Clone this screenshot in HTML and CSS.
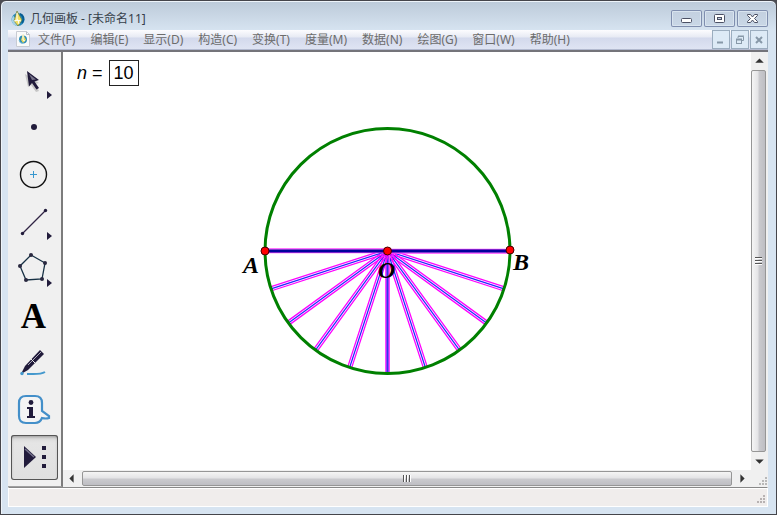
FILE: index.html
```html
<!DOCTYPE html>
<html lang="zh-CN">
<head>
<meta charset="utf-8">
<title>几何画板 - [未命名11]</title>
<link rel="stylesheet" href="styles.css">
</head>
<body>
<div class="window">
  <header class="titlebar">
    <svg class="logo" viewBox="0 0 16 16" aria-hidden="true">
      <circle cx="8" cy="8.500" r="6.500" fill="#2387b8"/>
      <path d="M1.500 8.500a6.500 6.500 0 0 0 6 6.500L5 7 3 4.500z" fill="#a5d3e6"/>
      <path d="M7 0l5 9-4 6-4-5z" fill="#f2df62" stroke="#637c45" stroke-width=".7"/>
      <path d="M7 2v7l4 1M4 10l4-1 1 4" fill="none" stroke="#fff" stroke-width="1"/>
      <path d="M10 3c3 1 5 5 2 9" fill="none" stroke="#075d91" stroke-width="2"/>
    </svg>
    <h1 class="title">几何画板 - [未命名11]</h1>
    <div class="window-buttons">
      <button class="win-btn" aria-label="最小化"><svg viewBox="0 0 31 17"><rect x="10.500" y="8.500" width="10" height="4" rx="1" fill="#fff" stroke="#4b5064"/></svg></button>
      <button class="win-btn" aria-label="最大化"><svg viewBox="0 0 31 17"><rect x="10.500" y="4.500" width="10" height="8" rx="1" fill="#fff" stroke="#4b5064"/><rect x="13.500" y="7.500" width="4" height="2" fill="#c5d3e4" stroke="#4b5064"/></svg></button>
      <button class="win-btn" aria-label="关闭"><svg viewBox="0 0 31 17"><path d="M10.500 4.500h3l2 2.500 2-2.500h3v1l-3 3 3 3v1h-3l-2-2.500-2 2.500h-3v-1l3-3-3-3z" fill="#fff" stroke="#4b5064"/></svg></button>
    </div>
  </header>

  <nav class="menubar" aria-label="菜单">
    <svg class="doc-icon" viewBox="0 0 14 16" aria-hidden="true">
      <path d="M.5.5h10l3 3v12H.5z" fill="#fafafa" stroke="#c8cbd3"/><path d="M10.500.5v3h3" fill="none" stroke="#b9bdc7"/>
      <circle cx="7" cy="8.500" r="4" fill="#2b8bb9"/><path d="M7 3l3 6-3 3-2-3z" fill="#e6d85c"/><path d="M7 4v5l2 1" fill="none" stroke="#fff"/><path d="M3 9a4 4 0 0 0 4 3.500" fill="none" stroke="#82c4dd"/>
    </svg>
    <div class="menus">
      <button>文件(F)</button><button>编辑(E)</button><button>显示(D)</button><button>构造(C)</button><button>变换(T)</button><button>度量(M)</button><button>数据(N)</button><button>绘图(G)</button><button>窗口(W)</button><button>帮助(H)</button>
    </div>
    <div class="doc-buttons">
      <button aria-label="最小化文档"><svg viewBox="0 0 18 18"><path d="M5 11.500h6" stroke="#8798a8" stroke-width="2"/></svg></button>
      <button aria-label="还原文档"><svg viewBox="0 0 18 18"><path d="M7 7V5.500h5.500v4H11M7 5h6" fill="none" stroke="#8798a8"/><rect x="5.500" y="8.500" width="5" height="4" fill="none" stroke="#8798a8"/><path d="M5 8.500h6" stroke="#8798a8" stroke-width="2"/></svg></button>
      <button aria-label="关闭文档"><svg viewBox="0 0 18 18"><path d="M6 6l6 6M12 6l-6 6" stroke="#8798a8" stroke-width="2"/></svg></button>
    </div>
  </nav>

  <main class="workspace">
    <aside class="toolbox" aria-label="工具箱">
      <button class="tool" aria-label="移动箭头工具"><svg viewBox="0 0 47 45">
        <path d="M14 15l3 13 3-2 5 7 3-1-4-7 4-1z" fill="#aaa" opacity=".6"/>
        <path d="M16 12l12 9-4.500 1.500 4.500 6.500-2.500 1.500L21 24l-3 3.500z" fill="#211b3b"/><path d="M18 15l7 5.500-4 .5z" fill="#77748a"/>
        <path d="M36 32v8l5-4z" fill="#211b3b"/></svg></button>
      <button class="tool" aria-label="点工具"><svg viewBox="0 0 47 45"><circle cx="23" cy="21" r="3" fill="#211b3b"/></svg></button>
      <button class="tool" aria-label="圆工具"><svg viewBox="0 0 47 45"><circle cx="22.500" cy="21.500" r="13" fill="none" stroke="#111" stroke-width="1.400"/><path d="M19 21.500h7M22.500 18v7" stroke="#3797ce"/></svg></button>
      <button class="tool" aria-label="线段工具"><svg viewBox="0 0 47 45"><path d="M11.500 33.500l23-23" stroke="#302444" stroke-width="1.200"/><circle cx="11.500" cy="33.500" r="1.700" fill="#211b3b"/><circle cx="34.500" cy="10.500" r="1.700" fill="#211b3b"/><path d="M36 32v8l5-4z" fill="#211b3b"/></svg></button>
      <button class="tool" aria-label="多边形工具"><svg viewBox="0 0 47 45"><path d="M20 8l14 8-3 16-16 1-6-14z" fill="none" stroke="#163044" stroke-width="1.300"/><g fill="#29283f"><circle cx="20" cy="8" r="2"/><circle cx="34" cy="16" r="2"/><circle cx="31" cy="32" r="2"/><circle cx="15" cy="33" r="2"/><circle cx="9" cy="19" r="2"/></g><path d="M36 32v8l5-4z" fill="#211b3b"/></svg></button>
      <button class="tool tool-text" aria-label="文本工具">A</button>
      <button class="tool" aria-label="标记工具"><svg viewBox="0 0 47 45"><path d="M10 33l4-8L29 9l4 4-16 16z" fill="#211b3b"/><path d="M17 24l13-13" stroke="#aaa7b7"/><path d="M20 18l5 5" stroke="#eee"/><path d="M16 33c7 0 13 1 18-2" fill="none" stroke="#4498cd" stroke-width="2"/><circle cx="11" cy="32.500" r="1.700" fill="#4498cd"/></svg></button>
      <button class="tool" aria-label="信息工具"><svg viewBox="0 0 47 45"><path d="M15 8h9q7 0 7 7v8l7 5v2q-3 1-7 0-2 5-7 5h-9q-7 0-7-7V15q0-7 7-7z" fill="#f4f4f4" stroke="#438fc9" stroke-width="2.200"/><circle cx="20" cy="14.500" r="2.400" fill="#211b3b"/><path d="M16 19h6v9h2v2h-8v-2h2v-7h-2z" fill="#211b3b"/></svg></button>
      <button class="tool selected" aria-label="自定义工具"><svg viewBox="0 0 47 45"><path d="M13 11v22l12-11z" fill="#211b3b"/><path d="M14 14l9 8" stroke="#75728c" stroke-width="1.500"/><path d="M31 11h4v4h-4zM31 20h4v4h-4zM31 29h4v4h-4z" fill="#211b3b"/></svg></button>
    </aside>

    <section class="sheet" aria-label="绘图区">
      <svg class="drawing" viewBox="63 52 688 418" role="img" aria-label="圆 O 及直径 AB">
        <defs>
          <g id="ray"><path d="M0-2h122.500M0 2h122.500" stroke="#f0f" stroke-width="1.300"/><path d="M0 0h122.500" stroke="#22f" stroke-width="1.200"/></g>
          <g id="flat"><path d="M0-1.500h122.500M0 2h122.500" stroke="#f4f" stroke-width="1.300"/><path d="M0 0h122.500" stroke="#00009c" stroke-width="3"/></g>
        </defs>
        <g transform="translate(387.500 251)">
          <use href="#ray" transform="rotate(18)"/><use href="#ray" transform="rotate(36)"/><use href="#ray" transform="rotate(54)"/><use href="#ray" transform="rotate(72)"/>
          <g transform="rotate(90)"><path d="M0 0h122.500" stroke="#f4f" stroke-width="5"/><path d="M0 0h122.500" stroke="#33e" stroke-width="2"/></g>
          <use href="#ray" transform="rotate(108)"/><use href="#ray" transform="rotate(126)"/><use href="#ray" transform="rotate(144)"/><use href="#ray" transform="rotate(162)"/>
          <use href="#flat" transform="rotate(180)"/><use href="#flat"/>
        </g>
        <circle cx="387.500" cy="251" r="122.500" fill="none" stroke="#008000" stroke-width="3"/>
        <g class="point-label"><text x="243" y="273">A</text><text x="378" y="278">O</text><text x="513" y="270">B</text></g>
        <g fill="#f00" stroke="#400" stroke-width="1"><circle cx="265" cy="251" r="4"/><circle cx="387.500" cy="251" r="4"/><circle cx="510" cy="250" r="4"/></g>
      </svg>
      <div class="parameter"><label for="n"><i>n</i> =</label><input id="n" value="10"></div>
    </section>

    <div class="scroll vertical">
      <button aria-label="向上"><svg viewBox="0 0 16 16"><path d="M4 10h8L8 6z" fill="#333"/></svg></button>
      <div class="thumb"><svg viewBox="0 0 16 16"><path d="M4 4.500h7M4 7.500h7M4 10.500h7" stroke="#555"/><path d="M4 5.500h7M4 8.500h7M4 11.500h7" stroke="#fff"/></svg></div>
      <button aria-label="向下"><svg viewBox="0 0 16 16"><path d="M4 6h8l-4 4z" fill="#333"/></svg></button>
    </div>
    <div class="scroll horizontal">
      <button aria-label="向左"><svg viewBox="0 0 16 16"><path d="M10 4v8L6 8z" fill="#333"/></svg></button>
      <div class="thumb"><svg viewBox="0 0 16 16"><path d="M4.500 4v7M7.500 4v7M10.500 4v7" stroke="#555"/><path d="M5.500 4v7M8.500 4v7M11.500 4v7" stroke="#fff"/></svg></div>
      <button aria-label="向右"><svg viewBox="0 0 16 16"><path d="M6 4v8l4-4z" fill="#333"/></svg></button>
    </div>
    <div class="corner"><svg class="grip" viewBox="0 0 10 10" aria-hidden="true"><path d="M7 1h2M4 4h2M7 4h2M1 7h2M4 7h2M7 7h2" stroke="#b8b8b8" stroke-width="2"/></svg></div>
  </main>
  <footer class="status"><svg class="grip" viewBox="0 0 10 10" aria-hidden="true"><path d="M7 1h2M4 4h2M7 4h2M1 7h2M4 7h2M7 7h2" stroke="#b8b2b2" stroke-width="2"/></svg></footer>
</div>
</body>
</html>
```
FILE: styles.css
```css
* {
  box-sizing: border-box;
}

body {
  margin: 0;
  background: #4c4c52;
  font-family: "Noto Sans", "Noto Sans CJK SC", sans-serif;
  font-size: 12px;
}

button {
  margin: 0;
  padding: 0;
  border: 0;
  background: none;
  color: inherit;
  font: inherit;
}

svg {
  display: block;
}

.window {
  display: flex;
  flex-direction: column;
  height: 100vh;
  padding: 0 8px 7px 7px;
  border: 1px solid #45454b;
  border-radius: 6px 6px 0 0;
  background: linear-gradient(#bccad9, #d7e4f1 30px);
  box-shadow: inset 0 1px #eef4fa, inset 1px 0 #eef4fa;
}

.titlebar {
  display: flex;
  align-items: center;
  flex: none;
  height: 29px;
  padding: 6px 0 0 2px;
}

.logo {
  width: 16px;
  height: 16px;
}

.title {
  flex: 1;
  margin: 0 0 0 4px;
  color: #36404a;
  font-size: 12px;
  font-weight: 400;
  line-height: 16px;
}

.window-buttons {
  display: flex;
  gap: 2px;
}

.win-btn {
  width: 31px;
  height: 17px;
  border-radius: 2px;
  background: linear-gradient(#c2cfdf, #cad8e7);
  box-shadow: inset 0 0 0 1px #7f8eae, inset 0 0 0 2px #d9e4ef;
}

.menubar {
  display: flex;
  flex: none;
  height: 20px;
  padding-left: 8px;
  border-bottom: 1px solid #b2b9cf;
  background: linear-gradient(#fcfcfe, #e7eaf4 7px, #d3d9ec 8px, #dfe4f3);
  color: #6c6c6c;
}

.doc-icon {
  width: 14px;
  height: 16px;
  margin-top: 1px;
}

.menus {
  display: flex;
  flex: 1;
  gap: 15px;
  margin-left: 8px;
}

.menus button {
  height: 19px;
  line-height: 19px;
}

.doc-buttons {
  display: flex;
  gap: 1px;
  height: 19px;
}

.doc-buttons button {
  width: 18px;
  background: #ddeaf6;
  box-shadow: inset 0 0 0 1px #9badbf;
}

.workspace {
  display: grid;
  flex: 1;
  min-height: 0;
  grid-template: minmax(0, 1fr) 17px / 55px minmax(0, 1fr) 17px;
  border-top: 2px solid #74747a;
  background: #f0f0f0;
}

.toolbox {
  display: flex;
  grid-row: 1 / 3;
  flex-direction: column;
  align-items: center;
  gap: 2px;
  padding-top: 7px;
  border-right: 2px solid #7c7c7c;
  border-bottom: 1px solid #a0a0a0;
}

.tool {
  width: 47px;
  height: 45px;
}

.tool-text {
  padding-right: 2px;
  color: #000;
  font: bold 35px/45px "Liberation Serif", serif;
}

.selected {
  border-radius: 3px;
  background: linear-gradient(#d4d4d4, #e5e5e5 8px, #e0e0e0);
  box-shadow: inset 0 0 0 1px #555, inset 0 2px 3px #999;
}

.sheet {
  position: relative;
  min-width: 0;
  min-height: 0;
  background: #fff;
}

.drawing {
  width: 100%;
  height: 100%;
}

.point-label {
  fill: #000;
  font: italic bold 24px "Liberation Serif", serif;
}

.parameter {
  position: absolute;
  top: 8px;
  left: 14px;
  display: flex;
  align-items: center;
  gap: 6px;
  color: #000;
  font: 18px/26px "Liberation Sans", sans-serif;
}

.parameter input {
  width: 30px;
  height: 26px;
  padding: 0;
  border: 1px solid #222;
  background: #fff;
  color: #000;
  font: inherit;
  text-align: center;
}

.scroll {
  display: flex;
  background: #f0f0f0;
}

.vertical {
  flex-direction: column;
}

.horizontal {
  grid-column: 2;
}

.scroll button {
  width: 17px;
  height: 17px;
  flex: none;
}

.thumb {
  display: flex;
  flex: 1;
  align-items: center;
  justify-content: center;
  border: 1px solid #969696;
  border-radius: 2px;
}

.thumb svg {
  width: 16px;
  height: 16px;
  flex: none;
}

.vertical .thumb {
  width: 15px;
  margin: 1px 0;
  background: linear-gradient(90deg, #f5f5f5, #e4e4e6 45%, #cacace 55%, #bebec3);
}

.horizontal .thumb {
  height: 15px;
  margin: 1px 2px;
  background: linear-gradient(#f5f5f5, #e4e4e6 45%, #cacace 55%, #bebec3);
}

.corner,
.status {
  display: flex;
  align-items: flex-end;
  justify-content: flex-end;
}

.grip {
  width: 10px;
  height: 10px;
}

.status {
  flex: none;
  height: 20px;
  padding: 0 1px 1px 0;
  border: 1px solid #fff;
  border-top: 1px solid #888;
  background: #f0edec;
  box-shadow: inset 0 1px #fff;
}
```
